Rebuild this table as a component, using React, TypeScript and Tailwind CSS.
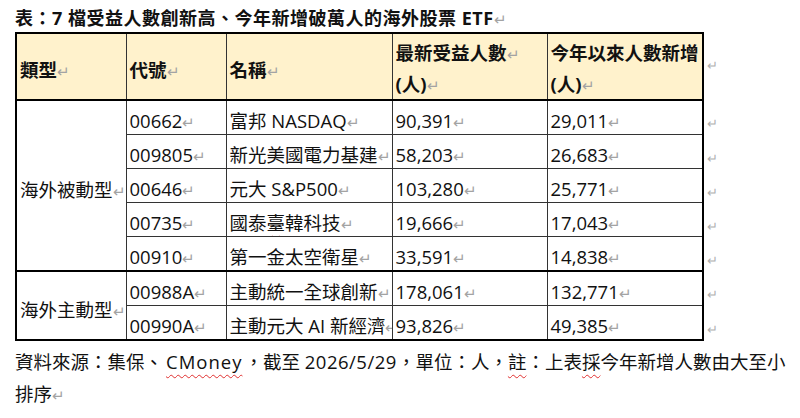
import type { ReactNode } from "react";

const font = "font-['Open_Sans','Noto_Sans_CJK_TC',sans-serif]";

function Ret() {
  return <span className="text-[#a3a3a3] text-[15px] leading-none font-normal">↵</span>;
}

function Wavy({ children }: { children: ReactNode }) {
  return (
    <span className="underline decoration-wavy decoration-[#e03030] decoration-1 underline-offset-[5px]">
      {children}
    </span>
  );
}

interface Row {
  code: string;
  name: ReactNode;
  holders: string;
  added: string;
}

const passive: Row[] = [
  { code: "00662", name: "富邦 NASDAQ", holders: "90,391", added: "29,011" },
  { code: "009805", name: "新光美國電力基建", holders: "58,203", added: "26,683" },
  { code: "00646", name: "元大 S&P500", holders: "103,280", added: "25,771" },
  {
    code: "00735",
    name: (
      <>
        國泰<Wavy>臺</Wavy>韓科技
      </>
    ),
    holders: "19,666",
    added: "17,043",
  },
  { code: "00910", name: "第一金太空衛星", holders: "33,591", added: "14,838" },
];

const active: Row[] = [
  { code: "00988A", name: "主動統一全球創新", holders: "178,061", added: "132,771" },
  { code: "00990A", name: "主動元大 AI 新經濟", holders: "93,826", added: "49,385" },
];

// border + horizontal padding shared by every cell
const edge = "border border-[#333] px-[3px] whitespace-nowrap overflow-hidden text-left";
const body = `${edge} h-[33px] pt-[7px] pb-0 leading-[26px] align-top`;

function RowEnd() {
  return <td className="pl-[3px] pt-[17px] align-top text-[#b0b0b0] text-[13px] leading-none">↵</td>;
}

function DataRows({ rows, group }: { rows: Row[]; group: string }) {
  return (
    <>
      {rows.map((r, i) => {
        const last = i === rows.length - 1 ? "border-b-2 border-b-black" : "";
        return (
          <tr key={r.code}>
            {i === 0 && (
              <td
                rowSpan={rows.length}
                className={`${edge} pt-[8px] pb-0 leading-[26px] align-middle border-l-2 border-l-black border-b-2 border-b-black`}
              >
                {group}
                <Ret />
              </td>
            )}
            <td className={`${body} ${last}`}>
              {r.code}
              <Ret />
            </td>
            <td className={`${body} ${last}`}>
              {r.name}
              <Ret />
            </td>
            <td className={`${body} ${last}`}>
              {r.holders}
              <Ret />
            </td>
            <td className={`${body} ${last} border-r-2 border-r-black`}>
              {r.added}
              <Ret />
            </td>
            <RowEnd />
          </tr>
        );
      })}
    </>
  );
}

const head = `${edge} h-[65px] align-top font-bold bg-[#fff2cc] border-t-2 border-t-black border-b-2 border-b-black`;
const headOne = `${head} pt-[19px] pb-0 leading-[34px]`;
const headTwo = `${head} pt-[3px] pb-0 leading-[31px]`;

export default function App() {
  return (
    <div className={`w-[800px] h-[418px] bg-white text-[#111] text-[18.5px] overflow-hidden ${font}`}>
      <div className="pl-[15px] pt-[4px]">
        <div className="font-bold text-[18px] leading-[28px] tracking-[0.5px]">
          表：7 檔受益人數創新高、今年新增破萬人的海外股票 ETF
          <Ret />
        </div>

        <table className="table-fixed border-collapse w-[717px]">
          <colgroup>
            <col className="w-[110px]" />
            <col className="w-[100px]" />
            <col className="w-[166px]" />
            <col className="w-[155px]" />
            <col className="w-[156px]" />
            <col className="w-[30px]" />
          </colgroup>
          <thead>
            <tr>
              <th className={`${headOne} border-l-2 border-l-black`}>
                類型
                <Ret />
              </th>
              <th className={headOne}>
                代號
                <Ret />
              </th>
              <th className={headOne}>
                名稱
                <Ret />
              </th>
              <th className={headTwo}>
                <div>
                  最新受益人數
                  <Ret />
                </div>
                <div>
                  (人)
                  <Ret />
                </div>
              </th>
              <th className={`${headTwo} border-r-2 border-r-black`}>
                <div>今年以來人數新增</div>
                <div>
                  (人)
                  <Ret />
                </div>
              </th>
              <th className="pl-[3px] pt-[26px] align-top text-left font-normal text-[#b0b0b0] text-[13px] leading-none">↵</th>
            </tr>
          </thead>
          <tbody>
            <DataRows rows={passive} group="海外被動型" />
            <DataRows rows={active} group="海外主動型" />
          </tbody>
        </table>

        <div className="leading-[32px] pt-[5px]">
          資料來源：集保、<Wavy>
            <span className="pl-[3px] pr-[2px] tracking-[1px]">CMoney</span>
          </Wavy>
          ，截至 <span className="tracking-[0.5px]">2026/5/29</span>，單位：人，<Wavy>註</Wavy>：上表
          <Wavy>採</Wavy>今年新增人數由大至小
          <br />
          排序
          <Ret />
        </div>
      </div>
    </div>
  );
}
